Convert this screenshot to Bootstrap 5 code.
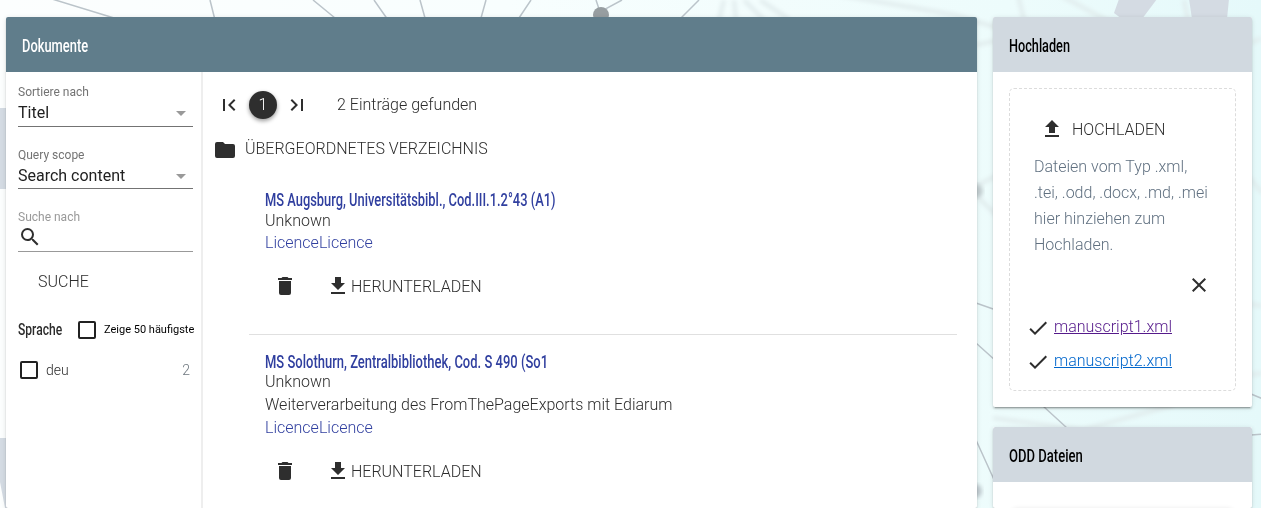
<!DOCTYPE html>
<html lang="de">
<head>
<meta charset="utf-8">
<meta name="viewport" content="width=device-width, initial-scale=1">
<title>Dokumente</title>
<link href="https://cdn.jsdelivr.net/npm/bootstrap@5.3.0/dist/css/bootstrap.min.css" rel="stylesheet">
<style>
body{font:300 16px/24px Roboto,sans-serif;color:#2c2c2c;height:508px;overflow:hidden;background:#f0fcfc}
.backdrop{position:fixed;inset:0;z-index:-1}
svg{display:block;flex:none}
.ico{width:24px;height:24px;fill:#2e2e2e}
.page{padding:17px 9px 0 6px;gap:16px;height:508px}
.paper{background:#fff;border-radius:2px;box-shadow:0 2px 2px rgba(0,0,0,.14),0 1px 5px rgba(0,0,0,.12),0 3px 1px -2px rgba(0,0,0,.2)}
.main-paper{width:971px;height:491px}
.side{width:259px}
.bar{height:55px;padding:2px 16px 0;border-radius:2px 2px 0 0;background:#d1d9e0;color:#000}
.bar-main{background:#607d8b;color:#fff}
.narrow{display:inline-block;font-weight:500;font-size:18px;white-space:nowrap;transform-origin:0 50%;transform:scaleX(var(--s,.76));margin:0}
.filters{width:197px;border-right:2px solid #eee;padding:10px 8px 0 12px}
.field{height:45px;width:175px;border-bottom:1px solid #737373;margin-bottom:17px}
.field-label{font-size:12px;font-weight:400;line-height:20px;color:#737373}
.field-value{font-weight:400;line-height:22px;color:#212121;padding-right:7px}
.field-scope .field-label{padding-top:1px}
.field-search{border-color:#999}
.field-search .field-label{color:#999;padding-top:1px;line-height:19px}
.caret{border:5px solid transparent;border-top-color:#999;border-bottom:0}
.box{width:18px;height:18px;border:2px solid #212121;border-radius:2px;flex:none}
.tiny{font-size:11px;font-weight:400;color:#000;white-space:nowrap}
.results{padding:20px 20px 0 10px}
.dot{width:28px;height:28px;border-radius:50%;background:#2e2e2e;color:#fff;box-shadow:0 2px 4px rgba(0,0,0,.4);margin:0 8px}
.entry{margin-left:36px;padding:0 16px}
.entry-title{line-height:20px;height:20px;color:#303f9f}
.entry-line{line-height:23px}
.licence{color:#303f9f;text-decoration:none}
.acts{margin-top:20px;padding-left:8px}
.acts span{padding:1px 0 0 1px;line-height:23px}
.rule{height:1px;background:#e0e0e0;margin:36px 0 17px 36px}
.drop{margin:16px;height:303px}
.dropzone{border:1px dashed #dcdcdc;border-radius:5px;padding:28px 24px 0}
.hint{line-height:26px;color:#607080}
.file-link{color:#0066cc}
.visited{color:#551a8b}
</style>
</head>
<body>
<svg class="backdrop" width="1261" height="508" viewBox="0 0 1261 508">
<defs><linearGradient id="g"><stop offset="0" stop-color="#fcfefe"/><stop offset=".4" stop-color="#f8fefe"/><stop offset=".8" stop-color="#edfcfc"/><stop offset="1" stop-color="#e5f9fa"/></linearGradient><filter id="b"><feGaussianBlur stdDeviation="2"/></filter></defs>
<path fill="url(#g)" d="M0 0h1261v508H0z"/>
<g fill="none" stroke="#e1eced" stroke-width="4" filter="url(#b)"><path d="M724 0l-5 20M734 0l2 20M744 0l20 20M760 0l30 20M840-5l115 20 40 12M1018-5l6 25M1060-5l55 30M1184 0l4 20M976 45l18-4M1261 38l-9 5M976 186l20-10M976 195l20 20M993 418l90 12 90-25M1250 178l12 15M1250 304l12 2M1250 375l12-2"/></g>
<circle cx="976" cy="191" r="7" fill="#c1cccf" filter="url(#b)"/><circle cx="975" cy="491" r="7" fill="#bdc8cd" filter="url(#b)"/>
<path fill="#d4dbe3" d="M1119-1l-5 14 8 6h20l15-20zM1189-1l3 20h35l2-20zM0 108h8v81H0zM0 438h8v70H5L0 482z"/>
<path fill="none" stroke="#bbc4ca" stroke-width="1.500" d="M52-1l62 19M210 0l5 20M313 0l22 18M374 0l14 20M420 0l5 18M486 0l-5 18M531 0l-12 18M596 0l4 12 22-12M699 0l-18 18M976 303l20 7M976 343l20 18M976 440l20 44M1043 406l24 22M1251 394l12 5M1251 435l12-1"/>
<circle cx="601" cy="15" r="8" fill="#979ea1"/>
</svg>
<div class="page d-flex align-items-start overflow-hidden">
<main class="paper main-paper d-flex flex-column">
<header class="bar bar-main d-flex align-items-center"><h1 class="narrow" style="--s:.716">Dokumente</h1></header>
<div class="d-flex flex-grow-1">
<aside class="filters">
<div class="field"><div class="field-label">Sortiere nach</div><div class="field-value d-flex justify-content-between align-items-center">Titel<i class="caret"></i></div></div>
<div class="field field-scope"><div class="field-label">Query scope</div><div class="field-value d-flex justify-content-between align-items-center">Search content<i class="caret"></i></div></div>
<div class="field field-search" style="margin-top:18px"><div class="field-label">Suche nach</div><svg class="ico" style="margin-top:-2px" viewBox="0 0 24 24"><path d="M15.5 14h-.79l-.28-.27A6.47 6.47 0 0 0 16 9.5 6.5 6.5 0 1 0 9.5 16c1.610 0 3.090-.59 4.230-1.570l.27.28v.79l5 4.990L20.490 19l-4.990-5zm-6 0C7.010 14 5 11.990 5 9.500S7.010 5 9.500 5 14 7.010 14 9.500 11.990 14 9.500 14z"/></svg></div>
<div style="padding:1px 0 0 20px">SUCHE</div>
<div class="d-flex align-items-center" style="margin-top:23px"><div style="width:60px;padding-top:1px"><h2 class="narrow" style="--s:.71;font-size:17px">Sprache</h2></div><span class="box me-2"></span><span class="tiny">Zeige 50 häufigste</span></div>
<div class="d-flex align-items-center" style="margin:16px 0 0 2px;font-size:14px"><span class="box me-2"></span>deu<span class="ms-auto text-secondary" style="margin-right:3px">2</span></div>
</aside>
<section class="results flex-grow-1">
<nav class="d-flex align-items-center" style="height:26px;padding-left:4px">
<svg class="ico" viewBox="0 0 24 24"><path d="M18.410 16.590L13.820 12l4.590-4.590L17 6l-6 6 6 6zM6 6h2v12H6z"/></svg>
<span class="dot d-flex align-items-center justify-content-center">1</span>
<svg class="ico" viewBox="0 0 24 24"><path d="M5.590 7.410L10.180 12l-4.590 4.590L7 18l6-6-6-6zM16 6h2v12h-2z"/></svg>
<span style="margin-left:28px">2 Einträge gefunden</span></nav>
<div class="d-flex align-items-center gap-2" style="margin-top:19px"><svg class="ico" style="margin-top:1px;margin-bottom:-1px" viewBox="0 0 24 24"><path d="M10 4H4a2 2 0 0 0-2 2v12a2 2 0 0 0 2 2h16a2 2 0 0 0 2-2V8a2 2 0 0 0-2-2h-8z"/></svg>ÜBERGEORDNETES VERZEICHNIS</div>
<article class="entry" style="margin-top:29px">
<div class="entry-title"><span class="narrow" style="--s:.716;line-height:20px">MS Augsburg, Universitätsbibl., Cod.III.1.2°43 (A1)</span></div>
<div class="entry-line" style="line-height:21px">Unknown</div><div class="entry-line"><a class="licence" href="#">LicenceLicence</a></div>
<div class="acts d-flex align-items-center"><svg class="ico" viewBox="0 0 24 24"><path d="M6 19a2 2 0 0 0 2 2h8a2 2 0 0 0 2-2V7H6zM19 4h-3.500l-1-1h-5l-1 1H5v2h14z"/></svg><svg class="ico" style="margin-left:29px" viewBox="0 0 24 24"><path d="M19 9h-4V3H9v6H5l7 7 7-7zM5 18v2h14v-2H5z"/></svg><span>HERUNTERLADEN</span></div>
</article>
<div class="rule"></div>
<article class="entry">
<div class="entry-title"><span class="narrow" style="--s:.722;line-height:20px">MS Solothurn, Zentralbibliothek, Cod. S 490 (So1</span></div>
<div class="entry-line" style="line-height:20px;margin-bottom:1px">Unknown</div><div class="entry-line">Weiterverarbeitung des FromThePageExports mit Ediarum</div><div class="entry-line"><a class="licence" href="#">LicenceLicence</a></div>
<div class="acts d-flex align-items-center"><svg class="ico" viewBox="0 0 24 24"><path d="M6 19a2 2 0 0 0 2 2h8a2 2 0 0 0 2-2V7H6zM19 4h-3.500l-1-1h-5l-1 1H5v2h14z"/></svg><svg class="ico" style="margin-left:29px" viewBox="0 0 24 24"><path d="M19 9h-4V3H9v6H5l7 7 7-7zM5 18v2h14v-2H5z"/></svg><span>HERUNTERLADEN</span></div>
</article>
</section>
</div>
</main>
<div class="side d-flex flex-column" style="gap:20px">
<section class="paper" style="height:390px">
<header class="bar d-flex align-items-center"><h2 class="narrow" style="--s:.705">Hochladen</h2></header>
<div class="drop dropzone">
<div class="d-flex align-items-center gap-2" style="padding-left:6px"><svg class="ico" viewBox="0 0 24 24"><path d="M5 10h4v6h6v-6h4l-7-7zM5 18h14v2H5z"/></svg><span style="margin:1px 0 -1px">HOCHLADEN</span></div>
<div class="hint" style="margin-top:13px">Dateien vom Typ .xml,<br>.tei, .odd, .docx, .md, .mei<br>hier hinziehen zum<br>Hochladen.</div>
<svg class="ico ms-auto" style="margin-top:15px" viewBox="0 0 24 24"><path d="M19 6.410L17.590 5 12 10.590 6.410 5 5 6.410 10.590 12 5 17.590 6.410 19 12 13.410 17.590 19 19 17.590 13.410 12z"/></svg>
<div class="d-flex align-items-center gap-1" style="margin:18px 0 0 -8px"><svg class="ico" style="margin:1px 0 -1px" viewBox="0 0 24 24"><path d="M9 16.170L4.830 12l-1.420 1.410L9 19 21 7l-1.410-1.410z"/></svg><a class="file-link visited" href="#">manuscript1.xml</a></div>
<div class="d-flex align-items-center gap-1" style="margin:10px 0 0 -8px"><svg class="ico" style="margin:1px 0 -1px" viewBox="0 0 24 24"><path d="M9 16.170L4.830 12l-1.420 1.410L9 19 21 7l-1.410-1.410z"/></svg><a class="file-link" href="#">manuscript2.xml</a></div>
</div>
</section>
<section class="paper overflow-hidden" style="height:81px">
<header class="bar d-flex align-items-center"><h2 class="narrow" style="--s:.725">ODD Dateien</h2></header>
<div class="paper" style="margin:26px 20px 0;height:20px"></div>
</section>
</div>
</div>
<script src="https://cdn.jsdelivr.net/npm/bootstrap@5.3.0/dist/js/bootstrap.bundle.min.js"></script>
</body>
</html>
